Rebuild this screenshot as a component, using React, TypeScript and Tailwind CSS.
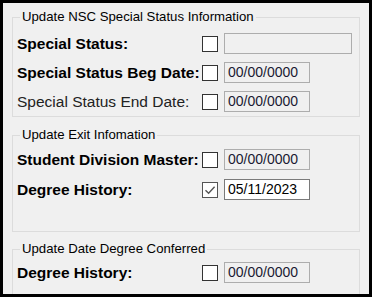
import React from "react";

function Check({ checked = false }: { checked?: boolean }) {
  return (
    <div
      className={`w-[16px] h-[16px] shrink-0 border bg-white flex items-center justify-center ${
        checked ? "border-[#555555]" : "border-[#333333]"
      }`}
    >
      {checked && (
        <svg width="12" height="12" viewBox="0 0 12 12">
          <path d="M1.5 6.2 L4.6 9.2 L10.6 2.8" fill="none" stroke="#555555" strokeWidth="1.4" />
        </svg>
      )}
    </div>
  );
}

function Row({
  label,
  bold = true,
  value,
  wide = false,
  checked = false,
}: {
  label: string;
  bold?: boolean;
  value: string;
  wide?: boolean;
  checked?: boolean;
}) {
  return (
    <div className="flex items-center h-[21px] pl-[4px]">
      <div
        className={`w-[185px] shrink-0 whitespace-nowrap text-[15.5px] leading-[18px] ${
          bold ? "font-bold text-black" : "text-[#222222]"
        }`}
      >
        {label}
      </div>
      <Check checked={checked} />
      <div
        className={`ml-[6px] h-[21px] border flex items-center pl-[3px] whitespace-nowrap text-[14px] ${
          wide ? "w-[128px]" : "w-[86px]"
        } ${checked ? "bg-white border-[#7a7a7a] text-black" : "bg-[#f0f0f0] border-[#adadad] text-[#1a1a33]"}`}
      >
        {value}
      </div>
    </div>
  );
}

function Group({
  title,
  children,
  className = "",
}: {
  title: string;
  children: React.ReactNode;
  className?: string;
}) {
  return (
    <fieldset className={`border border-[#dcdcdc] ${className}`}>
      <legend className="ml-[7px] px-[2px] leading-[16px] text-black whitespace-nowrap">{title}</legend>
      {children}
    </fieldset>
  );
}

export default function App() {
  return (
    <div className="w-[372px] h-[297px] border-[3px] border-black bg-[#f0f0f0] overflow-hidden font-['Liberation_Sans',Arial,sans-serif] text-[13.2px]">
      <div className="pl-[9px] pr-[9px] pt-[6px] flex flex-col">
        <Group title="Update NSC Special Status Information" className="pt-[8px] pb-[4px]">
          <div className="flex flex-col gap-[8px]">
            <Row label="Special Status:" value="" wide />
            <Row label="Special Status Beg Date:" value="00/00/0000" />
            <Row label="Special Status End Date:" bold={false} value="00/00/0000" />
          </div>
        </Group>
        <Group title="Update Exit Infomation" className="mt-[10px] h-[105px] pt-[6px]">
          <div className="flex flex-col gap-[9px]">
            <Row label="Student Division Master:" value="00/00/0000" />
            <Row label="Degree History:" value="05/11/2023" checked />
          </div>
        </Group>
        <Group title="Update Date Degree Conferred" className="mt-[9px] h-[80px] pt-[5px]">
          <Row label="Degree History:" value="00/00/0000" />
        </Group>
      </div>
    </div>
  );
}
